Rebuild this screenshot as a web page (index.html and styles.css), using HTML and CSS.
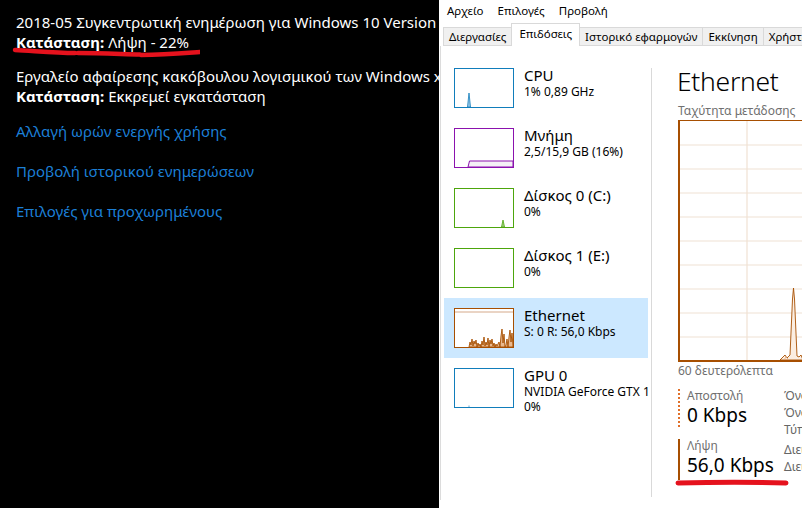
FILE: index.html
```html
<!DOCTYPE html>
<html lang="el">
<head>
<meta charset="utf-8">
<title>Windows Update - Διαχείριση εργασιών</title>
<link rel="stylesheet" href="styles.css">
</head>
<body>
<div class="screen">
  <section class="updates">
    <div class="update">
      <div class="line">2018-05 Συγκεντρωτική ενημέρωση για Windows 10 Version 1803 για συστήματα x64</div>
      <div class="line"><b>Κατάσταση:</b> Λήψη - 22%</div>
    </div>
    <div class="update second">
      <div class="line">Εργαλείο αφαίρεσης κακόβουλου λογισμικού των Windows x64 - Μάιος 2018</div>
      <div class="line"><b>Κατάσταση:</b> Εκκρεμεί εγκατάσταση</div>
    </div>
    <div class="links">
      <a class="link">Αλλαγή ωρών ενεργής χρήσης</a>
      <a class="link">Προβολή ιστορικού ενημερώσεων</a>
      <a class="link">Επιλογές για προχωρημένους</a>
    </div>
  </section>

  <section class="taskmgr">
    <nav class="menubar">
      <span>Αρχείο</span>
      <span>Επιλογές</span>
      <span>Προβολή</span>
    </nav>
    <div class="tabs">
      <div class="tab">Διεργασίες</div>
      <div class="tab active">Επιδόσεις</div>
      <div class="tab">Ιστορικό εφαρμογών</div>
      <div class="tab">Εκκίνηση</div>
      <div class="tab">Χρήστες</div>
      <div class="tab">Λεπτομέρειες</div>
    </div>
    <div class="content">
      <aside class="sidebar">
        <div class="item">
          <div class="thumb cpu">
            <svg viewBox="0 0 58 38" width="58" height="38"><path d="M12.5 38 L14 24 L15.5 38 Z" fill="#9cc8e6" stroke="#117dbb" stroke-width="0.8"/></svg>
          </div>
          <div class="info">
            <div class="name">CPU</div>
            <div class="sub">1% 0,89 GHz</div>
          </div>
        </div>
        <div class="item">
          <div class="thumb mem">
            <svg viewBox="0 0 58 38" width="58" height="38"><path d="M13 38 L14.5 32 L58 32 L58 38 Z" fill="#f4f0f5" stroke="#8b12ae" stroke-width="1"/></svg>
          </div>
          <div class="info">
            <div class="name">Μνήμη</div>
            <div class="sub">2,5/15,9 GB (16%)</div>
          </div>
        </div>
        <div class="item">
          <div class="thumb disk">
            <svg viewBox="0 0 58 38" width="58" height="38"><path d="M46.5 38 L48 31 L49.5 38 Z" fill="#a6d38a" stroke="#4da60c" stroke-width="0.8"/></svg>
          </div>
          <div class="info">
            <div class="name">Δίσκος 0 (C:)</div>
            <div class="sub">0%</div>
          </div>
        </div>
        <div class="item">
          <div class="thumb disk"></div>
          <div class="info">
            <div class="name">Δίσκος 1 (E:)</div>
            <div class="sub">0%</div>
          </div>
        </div>
        <div class="item selected">
          <div class="thumb eth">
            <svg viewBox="0 0 58 38" width="58" height="38">
              <line x1="0" y1="3" x2="58" y2="3" stroke="#d5a98a" stroke-width="1"/>
              <path d="M14 38 L15 33 L16 36 L17 30 L18 37 L19 32 L20 35 L21 31 L22 38 L23 34 L24 37 L25 35 L26 38 L27 32 L28 36 L29 28 L30 37 L31 33 L32 36 L33 29 L34 38 L35 31 L36 35 L37 30 L38 37 L39 34 L40 38 L41 35 L42 37 L44 33 L45 38 L46 27 L47 20 L48 34 L49 25 L50 38 L51 36 L52 30 L53 38 L54 28 L55 21 L56 33 L57 24 L58 38 Z" fill="#e9b88d" stroke="#a74f01" stroke-width="0.9" stroke-linejoin="round"/>
            </svg>
          </div>
          <div class="info">
            <div class="name">Ethernet</div>
            <div class="sub">S: 0 R: 56,0 Kbps</div>
          </div>
        </div>
        <div class="item">
          <div class="thumb gpu">
            <svg viewBox="0 0 58 38" width="58" height="38"><line x1="14" y1="36.5" x2="14" y2="38" stroke="#6aaad6" stroke-width="1"/></svg>
          </div>
          <div class="info">
            <div class="name">GPU 0</div>
            <div class="sub">NVIDIA GeForce GTX 1070</div>
            <div class="sub">0%</div>
          </div>
        </div>
      </aside>
      <div class="divider"></div>
      <main class="main">
        <h1 class="title">Ethernet</h1>
        <div class="caption">Ταχύτητα μετάδοσης</div>
        <div class="graph">
          <svg viewBox="0 0 200 239" width="200" height="239">
            <g stroke="#f0e1d3" stroke-width="1.2">
              <line x1="0" y1="24" x2="200" y2="24"/>
              <line x1="0" y1="48" x2="200" y2="48"/>
              <line x1="0" y1="72" x2="200" y2="72"/>
              <line x1="0" y1="96" x2="200" y2="96"/>
              <line x1="0" y1="120" x2="200" y2="120"/>
              <line x1="0" y1="144" x2="200" y2="144"/>
              <line x1="0" y1="168" x2="200" y2="168"/>
              <line x1="0" y1="192" x2="200" y2="192"/>
              <line x1="0" y1="216" x2="200" y2="216"/>
              <line x1="67" y1="0" x2="67" y2="239"/>
              <line x1="135" y1="0" x2="135" y2="239"/>
            </g>
            <path d="M100 239 L103 236 L105 234 L107 237 L109 235 L110 234 L112.5 178 L113.5 167 L114.5 178 L117 235 L119 236 L121 234 L123 239 Z" fill="#fbeee2" stroke="#a74f01" stroke-width="0.9" stroke-linejoin="round"/>
            <path d="M104 239 L106 236 L108 238" fill="none" stroke="#e2a477" stroke-width="0.8"/>
          </svg>
        </div>
        <div class="caption seconds">60 δευτερόλεπτα</div>
        <div class="stats">
          <div class="rates">
            <div class="rate send">
              <div class="rate-label">Αποστολή</div>
              <div class="rate-value">0 Kbps</div>
            </div>
            <div class="rate recv">
              <div class="rate-label">Λήψη</div>
              <div class="rate-value">56,0 Kbps</div>
            </div>
          </div>
          <div class="props">
            <div>Όνομα προσαρμογέα:</div>
            <div>Όνομα DNS:</div>
            <div>Τύπος σύνδεσης:</div>
            <div class="gap">Διεύθυνση IPv4:</div>
            <div>Διεύθυνση IPv6:</div>
          </div>
        </div>
      </main>
    </div>
  </section>

  <svg class="mark mark-status" width="200" height="12" viewBox="0 0 200 12">
    <path d="M15 4 C35 5 55 7 75 7 M78 7 C100 7 120 8 140 8.5 M141 9 C165 8.5 185 7 201 6" fill="none" stroke="#e5121d" stroke-width="4.5" stroke-linecap="round"/>
  </svg>
  <svg class="mark mark-recv" width="116" height="10" viewBox="0 0 116 10">
    <path d="M3 5 C40 4 80 4 111 5" fill="none" stroke="#e5121d" stroke-width="5" stroke-linecap="round"/>
  </svg>
</div>
</body>
</html>
```

FILE: styles.css
```css
html, body {
  margin: 0;
  padding: 0;
}

body {
  width: 802px;
  height: 508px;
  overflow: hidden;
  background: #fff;
}

.screen {
  position: relative;
  display: flex;
  width: 802px;
  height: 508px;
  overflow: hidden;
}

/* ---------- Windows Update (dark) ---------- */
.updates {
  width: 439px;
  flex: none;
  box-sizing: border-box;
  background: #000;
  color: #fff;
  padding: 12px 0 0 16px;
  font-family: "Noto Sans", "Open Sans", sans-serif;
  font-size: 15px;
  overflow: hidden;
}

.line {
  line-height: 20px;
  white-space: nowrap;
}

.line b {
  font-weight: 700;
}

.update.second {
  margin-top: 14px;
}

.links {
  display: flex;
  flex-direction: column;
  gap: 20px;
  margin-top: 15px;
}

.link {
  color: #1c7fd6;
  line-height: 20px;
  white-space: nowrap;
}

/* ---------- Task Manager ---------- */
.taskmgr {
  flex: 1;
  min-width: 0;
  display: flex;
  flex-direction: column;
  background: #fff;
  color: #000;
  font-family: "Noto Sans", "Open Sans", sans-serif;
  font-size: 11.5px;
}

.menubar {
  height: 21px;
  display: flex;
  gap: 14px;
  padding-left: 8px;
  line-height: 21px;
  white-space: nowrap;
}

.tabs {
  height: 25px;
  box-sizing: border-box;
  display: flex;
  align-items: flex-end;
  padding-left: 4px;
  white-space: nowrap;
}

.tab {
  height: 19px;
  box-sizing: border-box;
  padding: 0 5px;
  line-height: 17px;
  background: #f0f0f0;
  border: 1px solid #d9d9d9;
  border-right: none;
  flex: none;
}

.tab.active {
  height: 23px;
  line-height: 20px;
  background: #fff;
  border-right: 1px solid #d9d9d9;
  border-bottom: none;
  padding: 0 7px;
}

.tab.active + .tab {
  border-left: none;
}

.content {
  height: 454px;
  display: flex;
  margin-left: 1px;
  border-left: 1px solid #dcdcdc;
  font-size: 12px;
}

.sidebar {
  width: 207px;
  flex: none;
  box-sizing: border-box;
  padding: 12px 0 0 3px;
}

.item {
  height: 60px;
  box-sizing: border-box;
  display: flex;
  gap: 10px;
  padding: 10px 0 0 10px;
  overflow: hidden;
  white-space: nowrap;
}

.item.selected {
  background: #cce8ff;
}

.thumb {
  width: 60px;
  height: 40px;
  flex: none;
  box-sizing: border-box;
  border: 1px solid;
  background: #fff;
}

.thumb svg {
  display: block;
}

.thumb.cpu, .thumb.gpu { border-color: #117dbb; }
.thumb.mem { border-color: #8b12ae; }
.thumb.disk { border-color: #4da60c; }
.thumb.eth { border-color: #a74f01; }

.info {
  margin-top: -2px;
}

.name {
  font-size: 15px;
  line-height: 18px;
}

.sub {
  font-size: 12px;
  line-height: 15px;
}

.divider {
  width: 1px;
  flex: none;
  margin: 22px 0 3px 3px;
  background: #d9d9d9;
}

.main {
  flex: 1;
  min-width: 0;
  padding: 19px 0 0 25px;
  overflow: hidden;
}

.title {
  margin: 0;
  font-size: 26.5px;
  font-weight: 300;
  letter-spacing: -0.3px;
  line-height: 33px;
  white-space: nowrap;
}

.caption {
  color: #707070;
  font-size: 12px;
  line-height: 16px;
  white-space: nowrap;
  margin: 5px 0 0 1px;
}

.graph {
  width: 200px;
  height: 239px;
  margin: 1px 0 0 1px;
  border: 1px solid #a74f01;
  border-width: 1px 0 2px 2px;
}

.graph svg {
  display: block;
}

.caption.seconds {
  margin-top: 1px;
}

.stats {
  display: flex;
  margin-top: 10px;
  white-space: nowrap;
}

.rates {
  width: 106px;
  flex: none;
  margin-left: 1px;
}

.rate {
  padding-left: 7px;
  border-left: 2px solid #a74f01;
}

.rate.send {
  border-left: 2px dotted #e0702a;
}

.rate.recv {
  margin-top: 12px;
  padding-bottom: 3px;
}

.rate-label {
  color: #707070;
  font-size: 12px;
  line-height: 14px;
}

.rate-value {
  font-size: 19px;
  line-height: 24px;
}

.props {
  color: #666;
  font-size: 12px;
  line-height: 17px;
  margin-top: -2px;
}

.props .gap {
  margin-top: 3px;
}

/* ---------- hand-drawn annotation marks ---------- */
.mark {
  position: absolute;
  pointer-events: none;
}

.mark-status {
  left: 0;
  top: 46px;
}

.mark-recv {
  left: 675px;
  top: 478px;
}
```
